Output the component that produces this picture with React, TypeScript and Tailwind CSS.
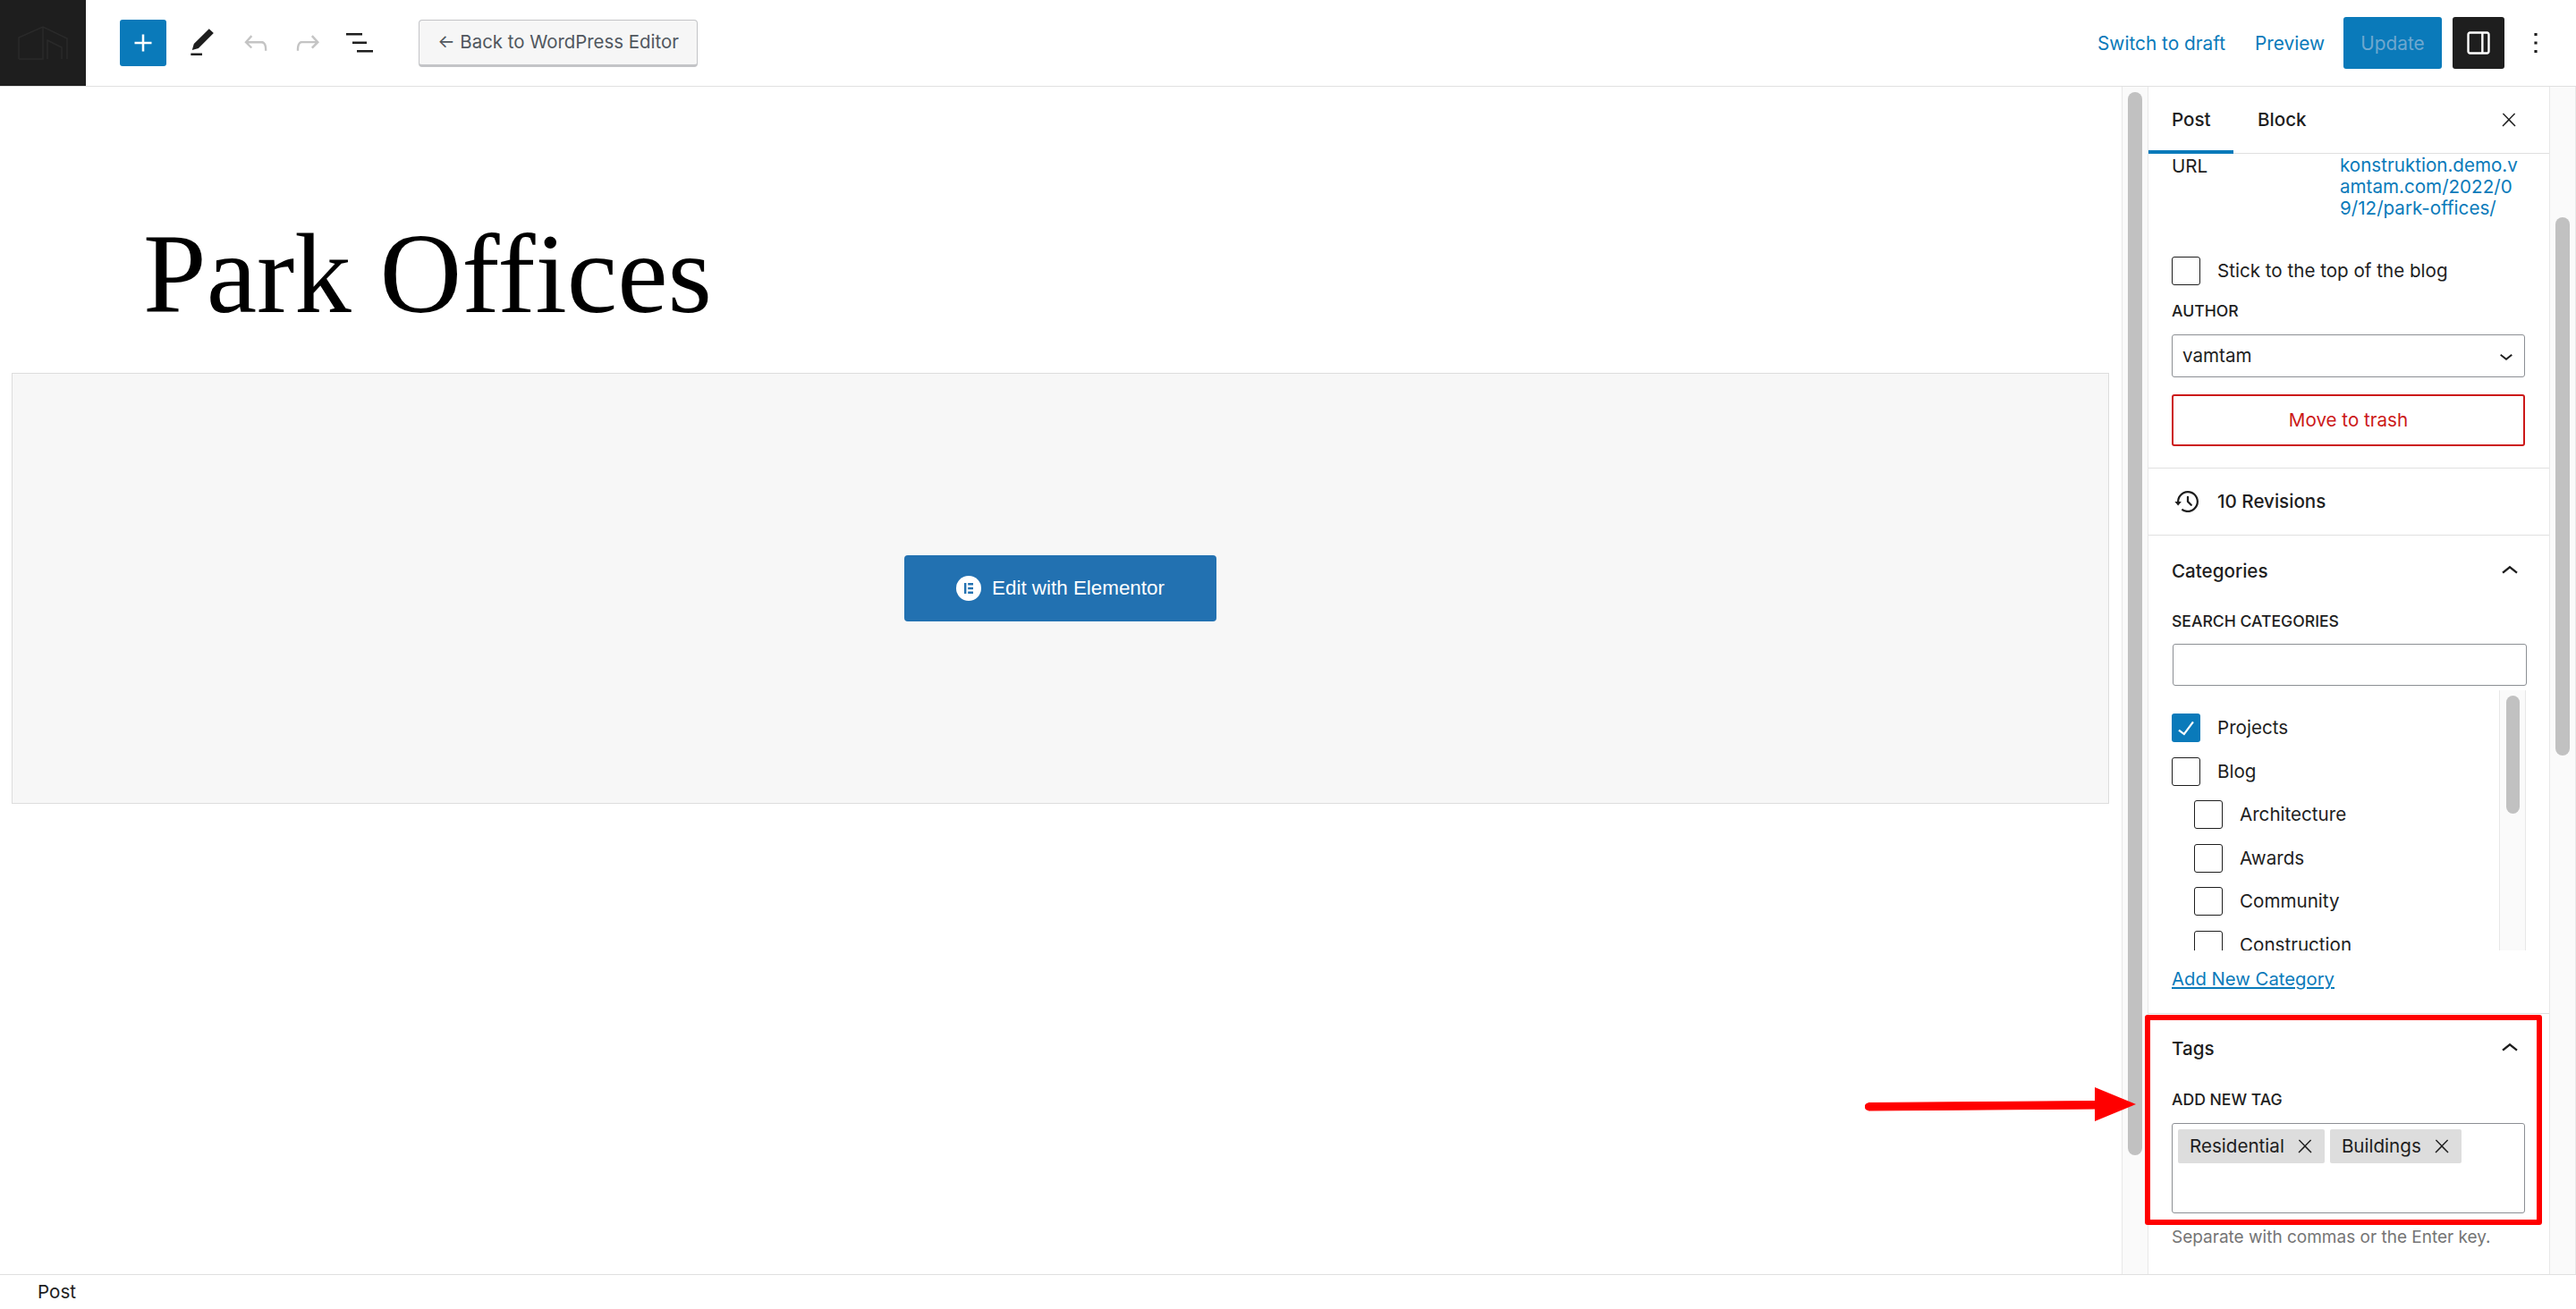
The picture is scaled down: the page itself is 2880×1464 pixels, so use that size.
import React from "react";

// WordPress block editor icons, same 24 grid as the reference
function WpIcon({ d, className }: { d: string; className?: string }) {
  return (
    <svg viewBox="0 0 24 24" fill="currentColor" className={className}>
      <path d={d} />
    </svg>
  );
}

const ICONS = {
  plus: "M18 11.2h-5.2V6h-1.6v5.2H6v1.6h5.2V18h1.6v-5.2H18z",
  edit: "M20.1 5.1L16.9 2 6.2 12.7l-1.3 4.4 4.5-1.3L20.1 5.1zM4 20.8h8v-1.5H4v1.5z",
  undo: "M18.3 11.7c-.6-.6-1.4-.9-2.3-.9H6.7l2.9-3.3-1.1-1-4.5 5L8.5 16l1-1-2.7-2.7H16c.5 0 .9.2 1.3.5 1 1 1 3.4 1 4.5v.3h1.5v-.2c0-1.5 0-4.3-1.5-5.7z",
  redo: "M15.6 6.5l-1.1 1 2.9 3.3H8c-.9 0-1.7.3-2.3.9-1.4 1.5-1.4 4.2-1.4 5.6v.2h1.5v-.3c0-1.1 0-3.5 1-4.5.3-.3.7-.5 1.3-.5h9.2L14.5 15l1.1 1.1 4.6-4.6-4.6-5z",
  close: "M13 11.8l6.1-6.3-1-1-6.1 6.2-6.1-6.2-1 1 6.1 6.3-6.5 6.7 1 1 6.5-6.6 6.5 6.6 1-1z",
  chevronUp: "M6.5 12.4L12 8l5.5 4.4-.9 1.2L12 10l-4.5 3.6-1-1.2z",
  chevronDown: "M17.5 11.6L12 16l-5.5-4.4.9-1.2L12 14l4.5-3.6 1 1.2z",
  backup: "M5.5 12h1.75l-2.5 3-2.5-3H4a8 8 0 113.134 6.35l.907-1.194A6.5 6.5 0 105.5 12zm9.53 1.97l-2.28-2.28V8.5a.75.75 0 00-1.5 0V12c0 .199.079.39.22.53l2.5 2.5a.75.75 0 101.06-1.06z",
  more: "M13 19h-2v-2h2v2zm0-6h-2v-2h2v2zm0-6h-2V5h2v2z",
  drawer: "M18 4H6c-1.1 0-2 .9-2 2v12c0 1.1.9 2 2 2h12c1.1 0 2-.9 2-2V6c0-1.1-.9-2-2-2zm-4 14.5H6c-.3 0-.5-.2-.5-.5V6c0-.3.2-.5.5-.5h8v13zm4.5-.5c0 .3-.2.5-.5.5h-2.5v-13H18c.3 0 .5.2.5.5v12z",
  check: "M16.7 7.1l-6.3 8.5-3.3-2.5-.9 1.2 4.5 3.4L17.9 8z",
};

function Checkbox({ checked }: { checked?: boolean }) {
  if (checked) {
    return (
      <span className="flex h-[32px] w-[32px] shrink-0 items-center justify-center rounded-[3px] bg-[#0a7aba] text-white">
        <WpIcon d={ICONS.check} className="h-[36px] w-[36px] shrink-0" />
      </span>
    );
  }
  return <span className="h-[32px] w-[32px] shrink-0 rounded-[3px] border border-[#1e1e1e] bg-white" />;
}

function CategoryRow({ label, checked, nested }: { label: string; checked?: boolean; nested?: boolean }) {
  return (
    <div className={`mb-[16.5px] flex h-[32px] items-center gap-[19px] ${nested ? "pl-[25px]" : ""}`}>
      <Checkbox checked={checked} />
      <span className="text-[20.6px] leading-[24px] text-[#1e1e1e]">{label}</span>
    </div>
  );
}

function PanelTitle({ label }: { label: string }) {
  return (
    <div className="flex items-center justify-between">
      <span className="text-[20.6px] font-medium leading-[24px] text-[#1e1e1e]">{label}</span>
      <WpIcon d={ICONS.chevronUp} className="mr-[-1px] h-[38px] w-[38px] text-[#1e1e1e]" />
    </div>
  );
}

function FieldLabel({ label }: { label: string }) {
  return <div className="text-[17.6px] font-medium uppercase leading-[20px] text-[#1e1e1e]">{label}</div>;
}

function Chip({ label }: { label: string }) {
  return (
    <span className="flex h-[38px] items-center gap-[11px] rounded-[2px] bg-[#dddddd] pl-[13px] pr-[10px] text-[20.6px] text-[#1e1e1e]">
      {label}
      <WpIcon d={ICONS.close} className="h-[24px] w-[24px]" />
    </span>
  );
}

function Sidebar() {
  return (
    <aside className="flex w-[448px] shrink-0 flex-col overflow-hidden bg-white">
      <div className="flex h-[75px] shrink-0 items-center border-b border-[#e0e0e0] pr-[33px]">
        <div className="flex h-[75px] w-[95px] items-center border-b-[4px] border-[#0a7aba] pl-[26px] pt-[4px] text-[20.6px] font-medium text-[#1e1e1e]">
          Post
        </div>
        <div className="flex-1 pl-[27px] text-[20.6px] font-medium text-[#1e1e1e]">Block</div>
        <WpIcon d={ICONS.close} className="h-[24px] w-[24px] text-[#1e1e1e]" />
      </div>

      <div className="px-[26px]">
        <div className="flex h-[72px] pt-[1px] text-[20.6px] leading-[24px]">
          <span className="w-[188px] pt-[1px] text-[#1e1e1e]">URL</span>
          <span className="w-[206px] break-all text-[#0a7aba]">konstruktion.demo.vamtam.com/2022/09/12/park-offices/</span>
        </div>
        <div className="mt-[43px] flex h-[32px] items-center gap-[19px]">
          <Checkbox />
          <span className="text-[20.6px] text-[#1e1e1e]">Stick to the top of the blog</span>
        </div>
        <div className="mt-[19px]">
          <FieldLabel label="Author" />
        </div>
        <div className="mt-[16px] flex h-[48px] w-[395px] items-center justify-between rounded-[3px] border border-[#8c8f94] pl-[11px] pr-[5px] text-[20.6px] text-[#1e1e1e]">
          vamtam
          <WpIcon d={ICONS.chevronDown} className="h-[30px] w-[30px]" />
        </div>
        <div className="mt-[19px] flex h-[58px] w-[395px] items-center justify-center rounded-[3px] border-2 border-[#cc1818] text-[20.6px] text-[#cc1818]">
          Move to trash
        </div>
      </div>

      <div className="mt-[24px] flex h-[76px] shrink-0 items-center gap-[15px] border-y border-[#e0e0e0] pl-[26px]">
        <WpIcon d={ICONS.backup} className="h-[36px] w-[36px] text-[#1e1e1e]" />
        <span className="text-[20.6px] font-medium text-[#1e1e1e]">10 Revisions</span>
      </div>

      <div className="border-b border-[#e0e0e0] px-[26px] pt-[21px]">
        <PanelTitle label="Categories" />
        <div className="mt-[27px]">
          <FieldLabel label="Search Categories" />
        </div>
        <div className="ml-[1px] mt-[15px] h-[47px] w-[396px] rounded-[3px] border border-[#8c8f94]" />
        <div className="mt-[5px] flex h-[291px] w-[396px] shrink-0 overflow-hidden">
          <div className="flex-1 pt-[26px]">
            <CategoryRow label="Projects" checked />
            <CategoryRow label="Blog" />
            <CategoryRow label="Architecture" nested />
            <CategoryRow label="Awards" nested />
            <CategoryRow label="Community" nested />
            <CategoryRow label="Construction" nested />
          </div>
          <div className="w-[30px] border-x border-[#e8e8e8] bg-[#fafafa] px-[7px] pt-[6px]">
            <div className="h-[132px] w-[15px] rounded-full bg-[#c1c1c1]" />
          </div>
        </div>
        <div className="mb-[26px] mt-[20px] text-[20.3px] leading-[24px] text-[#0a7aba] underline">Add New Category</div>
      </div>

      <div className="px-[26px] pt-[20px]">
        <PanelTitle label="Tags" />
        <div className="mt-[28px]">
          <FieldLabel label="Add New Tag" />
        </div>
        <div className="mt-[16px] flex h-[101px] w-[395px] shrink-0 items-start gap-[6px] rounded-[3px] border border-[#8c8f94] pl-[6px] pt-[6px]">
          <Chip label="Residential" />
          <Chip label="Buildings" />
        </div>
        <div className="mt-[15px] text-[19px] leading-[24px] text-[#757575]">Separate with commas or the Enter key.</div>
      </div>
    </aside>
  );
}

function ScrollTrack({ thumbTop, thumbHeight }: { thumbTop: string; thumbHeight: string }) {
  return (
    <div className="flex w-[30px] shrink-0 justify-center border-x border-[#e8e8e8] bg-[#fafafa]">
      <div className={`${thumbTop} ${thumbHeight} w-[16px] rounded-full bg-[#c1c1c1]`} />
    </div>
  );
}

export default function App() {
  return (
    <div className="relative flex h-[1464px] w-[2880px] flex-col overflow-hidden bg-white font-[family-name:Inter,sans-serif]">
      {/* Top bar */}
      <header className="flex h-[97px] shrink-0 items-center border-b border-[#e0e0e0]">
        <div className="flex h-[96px] w-[96px] shrink-0 items-center justify-center self-start bg-[#1e1e1e]">
          <svg viewBox="0 0 56 38" fill="none" stroke="#2a2a2a" strokeWidth="1.5" className="h-[38px] w-[56px]">
            <path d="M1 37V13L28 1L55 14V37M1 37H28V1M33 37V16L49 24V37" />
          </svg>
        </div>
        <div className="ml-[38px] flex h-[52px] w-[52px] items-center justify-center rounded-[3px] bg-[#0a7aba] text-white">
          <WpIcon d={ICONS.plus} className="h-[38px] w-[38px]" />
        </div>
        <WpIcon d={ICONS.edit} className="ml-[21px] h-[38px] w-[38px] text-[#1e1e1e]" />
        <WpIcon d={ICONS.undo} className="ml-[22px] h-[38px] w-[38px] text-[#c4c4c4]" />
        <WpIcon d={ICONS.redo} className="ml-[20px] h-[38px] w-[38px] text-[#c4c4c4]" />
        <svg viewBox="0 0 30 22" fill="#1e1e1e" className="ml-[24px] h-[22px] w-[30px]">
          <rect x="0" y="0" width="18" height="2.5" />
          <rect x="7" y="9.5" width="16" height="2.5" />
          <rect x="12" y="19" width="18" height="2.5" />
        </svg>
        <div className="ml-[51px] flex h-[53px] w-[312px] items-center justify-center rounded-[4px] border border-b-[3px] border-[#c3c4c7] bg-[#f6f6f6] pt-[1px] text-[20.4px] text-[#50575e]">
          ← Back to WordPress Editor
        </div>
        <div className="ml-auto pt-[2px] text-[20.8px] text-[#0a7aba]">Switch to draft</div>
        <div className="ml-[33px] pt-[2px] text-[20.8px] text-[#0a7aba]">Preview</div>
        <div className="ml-[21px] flex h-[58px] w-[110px] items-center justify-center rounded-[3px] bg-[#0a7aba] pt-[2px] text-[20.8px] text-[#6fa8cf]">
          Update
        </div>
        <div className="ml-[12px] flex h-[58px] w-[58px] items-center justify-center rounded-[3px] bg-[#1e1e1e] text-white">
          <WpIcon d={ICONS.drawer} className="h-[38px] w-[38px]" />
        </div>
        <WpIcon d={ICONS.more} className="ml-[16px] mr-[26px] h-[38px] w-[38px] text-[#1e1e1e]" />
      </header>

      {/* Editor body */}
      <div className="flex min-h-0 flex-1">
        <main className="min-w-0 flex-1">
          <h1 className="ml-[160px] mt-[159px] font-[family-name:'Liberation_Serif',serif] text-[127px] font-normal leading-[100px] text-black">
            Park Offices
          </h1>
          <div className="ml-[13px] mt-[61px] flex h-[482px] w-[2345px] items-center justify-center border border-[#dddddd] bg-[#f7f7f7]">
            <div className="flex h-[74px] w-[349px] items-center justify-center gap-[12px] rounded-[4px] bg-[#2271b1] font-[family-name:'Liberation_Sans',sans-serif] text-[22.4px] text-white">
              <svg viewBox="0 0 28 28" className="h-[28px] w-[28px]">
                <circle cx="14" cy="14" r="14" fill="#ffffff" />
                <path d="M9 8h2.4v12H9zM13.2 8H19v2.4h-5.8zM13.2 12.8H19v2.4h-5.8zM13.2 17.6H19V20h-5.8z" fill="#2271b1" />
              </svg>
              Edit with Elementor
            </div>
          </div>
        </main>
        <ScrollTrack thumbTop="mt-[6px]" thumbHeight="h-[1189px]" />
        <Sidebar />
        <ScrollTrack thumbTop="mt-[146px]" thumbHeight="h-[602px]" />
      </div>

      {/* Footer breadcrumb */}
      <footer className="flex h-[39px] shrink-0 items-center border-t border-[#e0e0e0] pl-[42px] text-[20.6px] text-[#1e1e1e]">
        Post
      </footer>

      {/* Red annotation drawn over the screenshot */}
      <div className="absolute left-[2398px] top-[1135px] h-[235px] w-[444px] rounded-[3px] border-[6px] border-[#ff0000]" />
      <svg viewBox="0 0 304 40" className="absolute left-[2085px] top-[1215px] h-[40px] w-[304px]">
        <path d="M4 18.5L258 16.5V25L4 27Z" fill="#ff0000" stroke="#ff0000" strokeLinejoin="round" strokeWidth="1" />
        <circle cx="4" cy="22.7" r="4.3" fill="#ff0000" />
        <path d="M257 1L303 20L257 39Z" fill="#ff0000" />
      </svg>
    </div>
  );
}
